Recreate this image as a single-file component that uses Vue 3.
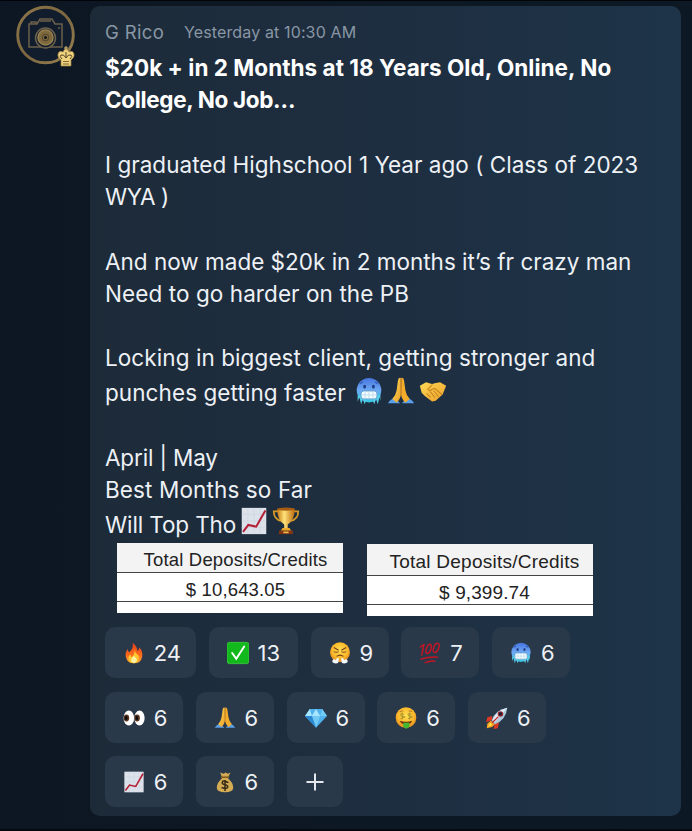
<script setup>
const lines = [
  { text: '$20k + in 2 Months at 18 Years Old, Online, No', kind: 'bold b1' },
  { text: 'College, No Job…', kind: 'bold b2' },
  { text: '' },
  { text: 'I graduated Highschool 1 Year ago ( Class of 2023', kind: 'l1' },
  { text: 'WYA )', kind: 'l2' },
  { text: '' },
  { text: 'And now made $20k in 2 months it’s fr crazy man', kind: 'l3' },
  { text: 'Need to go harder on the PB', kind: 'l4' },
  { text: '' },
  { text: 'Locking in biggest client, getting stronger and', kind: 'l5' },
  { text: 'punches getting faster', kind: 'tall l6', icons: ['cold', 'pray', 'shake'] },
  { text: '' },
  { text: 'April | May', kind: 'l7' },
  { text: 'Best Months so Far', kind: 'l8' },
  { text: 'Will Top Tho', kind: 'tall l9', icons: ['chart', 'trophy'] },
]
const rows = [
  [['fire', 24], ['check', 13], ['huff', 9], ['hundred', 7], ['cold', 6]],
  [['eyes', 6], ['pray', 6], ['gem', 6], ['money', 6], ['rocket', 6]],
  [['chart', 6], ['bag', 6]],
]
</script>

<template>
  <main class="page">
    <svg class="defs" aria-hidden="true">
      <defs>
        <linearGradient id="gCold" x1="0" y1="0" x2="0" y2="1"><stop offset="0" stop-color="#4573df" /><stop offset=".5" stop-color="#6da8f2" /><stop offset="1" stop-color="#35c9e6" /></linearGradient>
        <radialGradient id="gFace" cx=".5" cy=".4" r=".6"><stop offset="0" stop-color="#ffdf50" /><stop offset=".65" stop-color="#fbb82c" /><stop offset="1" stop-color="#e28a1c" /></radialGradient>
        <linearGradient id="gHand" x1="0" y1="0" x2="1" y2="1"><stop offset="0" stop-color="#ffda55" /><stop offset="1" stop-color="#eba02b" /></linearGradient>
        <linearGradient id="gGold" x1="0" y1="0" x2="1" y2="0"><stop offset="0" stop-color="#c77c12" /><stop offset=".4" stop-color="#ffe27a" /><stop offset="1" stop-color="#bd6b0d" /></linearGradient>
        <linearGradient id="gFire" x1="0" y1="0" x2="0" y2="1"><stop offset="0" stop-color="#e9401c" /><stop offset=".6" stop-color="#fb6a1d" /><stop offset="1" stop-color="#ffac31" /></linearGradient>
        <linearGradient id="gRing" x1="0" y1="0" x2="1" y2="1"><stop offset="0" stop-color="#8d7748" /><stop offset=".5" stop-color="#7b6640" /><stop offset="1" stop-color="#9b8350" /></linearGradient>
        <symbol id="cold" viewBox="0 0 32 32">
          <circle cx="16" cy="15" r="14" fill="url(#gCold)" />
          <path d="M3 21v7l2-5 2 8 2-6 2 6 2-5h7l2 5 2-6 2 6 2-8 1 4V20z" fill="#55cce9" />
          <ellipse cx="11" cy="11" rx="1.6" ry="2.2" fill="#213a88" /><ellipse cx="21" cy="11" rx="1.6" ry="2.2" fill="#213a88" />
          <path d="M9 6q-2 0-3 2M23 6q2 0 3 2" stroke="#315bb8" stroke-width="1.5" fill="none" />
          <rect x="7" y="16" width="18" height="9" rx="3" fill="#f2fbff" stroke="#639bc8" />
          <path d="M7 20.5h18M11.5 16v9M16 16v9M20.5 16v9" stroke="#b4d6e4" stroke-width=".8" />
        </symbol>
        <symbol id="pray" viewBox="0 0 32 32">
          <path d="M1 30q3-5 8-6l6 6H1zM31 30q-3-5-8-6l-6 6h14z" fill="#5b9fe8" />
          <path d="M15.8 1Q13 0 12.5 4L11 15q-1 6-5 10l5 4q4-3 5-9z" fill="url(#gHand)" />
          <path d="M16.2 1Q19 0 19.5 4L21 15q1 6 5 10l-5 4q-4-3-5-9z" fill="#f4ad2b" />
          <path d="M16 2v19" stroke="#b56f1b" stroke-width="1" fill="none" />
        </symbol>
        <symbol id="shake" viewBox="0 0 32 32">
          <path d="M1 10l7-4 7 2 3-1 6-1 7 4-4 10-8 7-4 1-8-6-4-4z" fill="url(#gHand)" />
          <path d="M15 9l-5 5q2 3 5 0l3-1 8 7M9 19l4 4M13 17l5 6M17 16l5 6" stroke="#c98520" stroke-width="1.3" fill="none" stroke-linecap="round" />
        </symbol>
        <symbol id="chart" viewBox="0 0 32 32">
          <rect x="2" y="1" width="28" height="30" fill="#dce1ea" />
          <path d="M2 8.5h28M2 16h28M2 23.5h28M9 1v30M16 1v30M23 1v30" stroke="#cdd5df" stroke-width=".7" />
          <path d="M3.5 28.5l6-8 9 2 4-7L29 4" stroke="#b51e34" stroke-width="2.3" fill="none" />
        </symbol>
        <symbol id="trophy" viewBox="0 0 32 32">
          <path d="M8 5H2q0 9 9 11M24 5h6q0 9-9 11" stroke="#d59a25" stroke-width="2" fill="none" />
          <path d="M6 2h20q0 13-8 18v5h-4v-5Q6 15 6 2z" fill="url(#gGold)" />
          <ellipse cx="16" cy="2.5" rx="10" ry="1.8" fill="#a65d12" />
          <path d="M12 24h8l2 3H10z" fill="#efaa28" /><path d="M8 27h16v4H8z" fill="#813411" /><path d="M13 28h6v2h-6z" fill="#e9b84a" />
        </symbol>
        <symbol id="fire" viewBox="0 0 32 32">
          <path d="M14 1q7 6 7 12 2-1 3-5 5 6 4 13-2 10-12 10T4 21q-1-6 3-11 0 4 2 5 7-6 5-14z" fill="url(#gFire)" />
          <path d="M17 11q1 6 6 9 1 10-7 11-9-1-8-9 1-3 3-4 0 3 2 4 4-4 4-11z" fill="#ffc62d" />
          <path d="M16 20q5 5 4 8-4 5-8 0-1-4 4-8z" fill="#fff2a3" />
        </symbol>
        <symbol id="check" viewBox="0 0 32 32">
          <rect x="0" y="0.500" width="32" height="31" rx="3.5" fill="#12b91c" stroke="#4ad149" />
          <path d="M7.500 16l6 8.500L25 6.500" stroke="#fff" stroke-width="2.800" fill="none" stroke-linecap="round" />
        </symbol>
        <symbol id="huff" viewBox="0 0 32 32">
          <circle cx="16" cy="15" r="14.5" fill="url(#gFace)" />
          <path d="M7 8l7 4M25 8l-7 4M7 14q4 2 7 0M18 14q3 2 7 0M11 21q5-4 10 0" stroke="#774216" stroke-width="1.6" fill="none" />
          <path d="M14 23q-3 0-4 3-4-2-5 1t3 4q6 1 6-3zM18 23q3 0 4 3 4-2 5 1t-3 4q-6 1-6-3z" fill="#f4f7fb" />
        </symbol>
        <symbol id="hundred" viewBox="0 0 32 32">
          <g stroke="#c91424" stroke-width="2.1" fill="none" stroke-linecap="round">
            <path d="M2 7l5-3-3 15" /><ellipse cx="14" cy="10" rx="3.3" ry="7" transform="rotate(18 14 10)" /><ellipse cx="25" cy="8.5" rx="3.6" ry="7" transform="rotate(22 25 8.5)" />
            <path d="M3 25q12-4 24-3M9 30q8-3 14-2" />
          </g>
        </symbol>
        <symbol id="eyes" viewBox="0 0 32 32">
          <ellipse cx="8.5" cy="16" rx="7.7" ry="11" fill="#fff" /><ellipse cx="24" cy="16" rx="7.5" ry="11" fill="#fff" />
          <ellipse cx="5" cy="16" rx="4" ry="5" fill="#5b341d" /><ellipse cx="20.5" cy="16" rx="4" ry="5" fill="#5b341d" />
          <ellipse cx="4.6" cy="16" rx="2" ry="3" fill="#070b11" /><ellipse cx="20.1" cy="16" rx="2" ry="3" fill="#070b11" />
        </symbol>
        <symbol id="gem" viewBox="0 0 32 32">
          <path d="M7 3h18l7 10-16 17L0 13z" fill="#50b2ec" /><path d="M7 3l3 10H0zM16 3l6 10H10z" fill="#a8e5ff" /><path d="M25 3l-3 10h10zM10 13h12l-6 17z" fill="#71c9f5" /><path d="M0 13h10l6 17z" fill="#2b87d0" />
        </symbol>
        <symbol id="money" viewBox="0 0 32 32">
          <circle cx="16" cy="15.5" r="15" fill="url(#gFace)" /><path d="M7 7q2-2 5-1M20 6q3-1 5 1" stroke="#8b5618" fill="none" /><path d="M7 20q9 3 18 0-2 6-9 6t-9-6z" fill="#743510" />
          <path d="M12 23h9v5q-4.500 7-9 0z" fill="#43b82e" />
          <g stroke="#a1912d" stroke-width="1.3" fill="none"><path d="M13 11q-5-3-5 0t5 3-5 3M10.500 8v10M24 11q-5-3-5 0t5 3-5 3M21.500 8v10" /></g>
        </symbol>
        <symbol id="rocket" viewBox="0 0 32 32">
          <path d="M9 13L2 15 0 22l9-3zM19 22l-2 9-6 1 2-9z" fill="#dc3922" />
          <path d="M7 20l-5 4-1 7 8-2 4-4z" fill="#fb9e24" /><path d="M6 23l-3 6 6-3z" fill="#ffed44" />
          <path d="M8 20Q12 5 31 1q-2 18-18 24z" fill="#adc9dc" /><path d="M10 18Q15 5 31 1L13 22z" fill="#e1edf3" />
          <circle cx="21" cy="10" r="4" fill="#9b2730" /><circle cx="21" cy="10" r="2.300" fill="#182032" /><path d="M9 23l9-9" stroke="#c52c2e" stroke-width="2" />
        </symbol>
        <symbol id="bag" viewBox="0 0 32 32">
          <path d="M9 2l5 2 3-2 3 2 4-2-4 8q8 7 8 14 0 7-12 7T4 24q0-7 8-14z" fill="#d2ab53" /><path d="M10 9h12" stroke="#825c22" stroke-width="2.300" />
          <path d="M21 17q-9-5-9 0 0 2 4 3t4 3q0 4-9 1M16 13v16" stroke="#382c18" stroke-width="2.200" fill="none" />
        </symbol>
      </defs>
    </svg>

    <div class="avatar">
      <svg viewBox="0 0 64 64" width="64" height="64" fill="none">
        <circle cx="31.500" cy="32" r="27.800" fill="#111c2d" stroke="url(#gRing)" stroke-width="2.900" />
        <g stroke="#6c604b" stroke-width="1.500">
          <path d="M15 21h8l3-5h12l3 5h7v23H15zM17 21v-2h5v2" />
          <circle cx="31.500" cy="35" r="10" fill="#111c2d" /><circle cx="31.500" cy="34.500" r="7.500" fill="#7d673d" stroke="#97804f" />
          <path d="M26 18h11M44 25h2" />
        </g>
        <circle cx="31.500" cy="34.500" r="3.300" stroke="#534529" /><circle cx="31.500" cy="34.500" r="1.500" fill="#101720" />
        <path d="M47 63v-6q-4-3-3-6 1-4 5-2 1-3 3-3t3 3q4-2 5 2 1 3-3 6v6z" fill="#efd37f" stroke="#9a7c3c" stroke-width=".7" />
        <path d="M48 56q-3-3-1-4 3-1 5 3 2-4 5-3 2 1-1 4M52 49v5" stroke="#564522" /><path d="M49 58.500h6M49 61h6" stroke="#806735" /><path d="M52 43v5M50 45h4" stroke="#dec276" />
      </svg>
    </div>

    <section class="card">
      <header class="head"><span class="name">G Rico</span><span class="time">Yesterday at 10:30 AM</span></header>
      <div class="message">
        <div v-for="(line, i) in lines" :key="i" class="line" :class="line.kind">
          <span class="words">{{ line.text }}</span>
          <span v-if="line.icons" class="icons"><svg v-for="n in line.icons" :key="n" :class="n"><use :href="'#' + n" /></svg></span>
        </div>
      </div>
      <div class="tables">
        <div class="table first"><div class="th"><span>Total Deposits/Credits</span></div><div class="td"><span>$ 10,643.05</span></div></div>
        <div class="table second"><div class="th"><span>Total Deposits/Credits</span></div><div class="td"><span>$ 9,399.74</span></div></div>
      </div>
      <div class="reactions">
        <div v-for="(row, i) in rows" :key="i" class="row">
          <button v-for="[icon, count] in row" :key="icon" :class="'r-' + icon"><svg><use :href="'#' + icon" /></svg><span>{{ count }}</span></button>
          <button v-if="i === 2" class="add" aria-label="Add"><svg viewBox="0 0 18 18"><path d="M9 .5v17M.5 9h17" stroke="#e5e9ed" stroke-width="2" /></svg></button>
        </div>
      </div>
    </section>
  </main>
</template>

<style>
body { margin: 0; background: #0d1824; }
</style>
<style scoped>
* { box-sizing: border-box; }
.page { width: 692px; height: 831px; display: flex; align-items: flex-start; padding-top: 5px; background: linear-gradient(90deg, #0d1723, #0c1924); border-top: 1px solid #020408; border-bottom: 2px solid #05090e; overflow: hidden; font-family: Inter, sans-serif; }
.defs { position: absolute; width: 0; height: 0; }
.avatar { width: 90px; height: 70px; padding-left: 14px; margin-top: -3px; flex: none; }
.avatar svg { display: block; }
.card { width: 591px; height: 810px; flex: none; border-radius: 10px; padding: 13px 15px; background: linear-gradient(90deg, #1d2b39, #1e2f42 60%, #1e3448); }
.head { height: 26px; display: flex; align-items: center; color: #8997a5; white-space: nowrap; }
.name { width: 79px; font-size: 18.5px; letter-spacing: .35px; }
.time { font-size: 16px; letter-spacing: .13px; }
.message { margin-top: 6.6px; }
.line { height: 32.3px; display: flex; align-items: center; color: #edf1f5; font-size: 22.5px; letter-spacing: .04px; line-height: 32px; white-space: nowrap; }
.bold { font-weight: 700; color: #fff; letter-spacing: .03px; }
.b2 { letter-spacing: -.35px; }
.l1 { letter-spacing: .02px; }
.l2 { letter-spacing: -.4px; }
.l3 { letter-spacing: 0; }
.l4, .l5, .l6 { letter-spacing: .08px; }
.l7 { letter-spacing: -.15px; }
.l8 { letter-spacing: .12px; }
.l9 { letter-spacing: -.12px; }
.tall { height: 35px; }
.tall .words { position: relative; top: 1px; }
.icons { display: flex; align-items: center; gap: 4px; margin-left: 9px; padding-bottom: 3px; }
.l9 .icons { margin-left: 4px; padding-bottom: 5px; }
.icons svg { width: 28px; height: 28px; }
.tables { height: 73px; margin-top: 2px; padding-left: 12px; display: flex; gap: 24px; align-items: flex-start; color: #222; font-family: "Liberation Sans", sans-serif; white-space: nowrap; }
.table { width: 226px; height: 70px; background: #fff; }
.second { height: 72px; margin-top: 1px; }
.th, .td { display: flex; align-items: center; justify-content: center; border-bottom: 1.500px solid #444; }
.th { height: 30px; background: #f3f3f3; font-size: 18.500px; letter-spacing: .18px; padding: 4px 0 0 11px; }
.td { height: 29px; font-size: 18.500px; letter-spacing: .16px; padding: 5px 0 0 11px; }
.second .th { height: 32px; font-size: 19px; letter-spacing: .24px; padding-left: 9px; }
.second .td { font-size: 19px; padding-left: 9px; letter-spacing: .1px; }
.reactions { margin-top: 11px; display: grid; gap: 13.500px; }
.row { display: flex; gap: 12.800px; }
button { width: 78px; height: 51px; border: 0; border-radius: 10px; background: #2a3949; color: #edf1f5; font: 400 22px Inter, sans-serif; display: flex; align-items: center; justify-content: flex-start; padding: 1px 0 0 18px; gap: 8.800px; }
button svg { width: 22px; height: 24px; flex: none; }
.r-fire { width: 91px; } .r-check { width: 89px; }
.add { width: 56px; padding: 0; justify-content: center; }
.add svg { width: 18px; height: 18px; }
</style>
